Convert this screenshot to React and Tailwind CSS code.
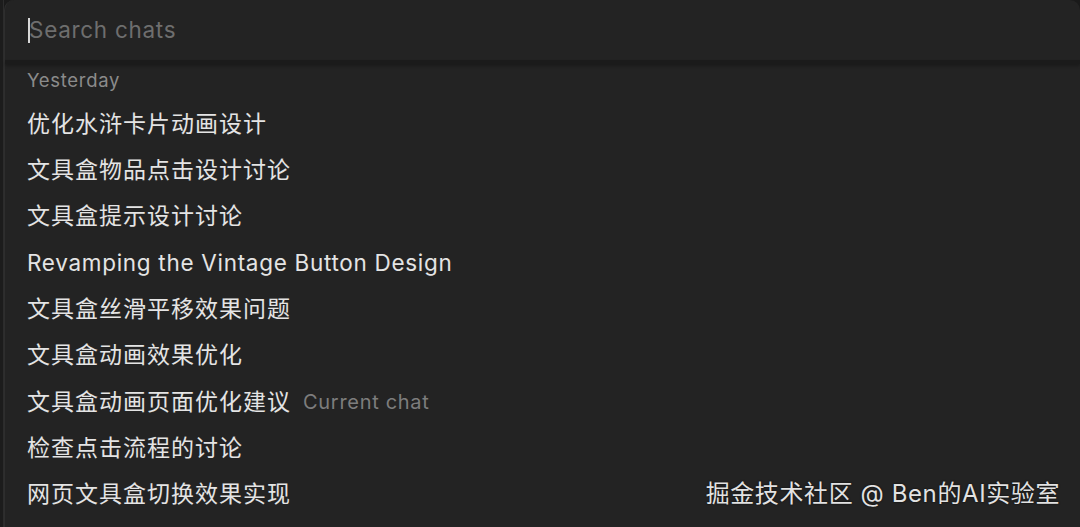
import React from 'react';

const chats = [
  { title: '优化水浒卡片动画设计' },
  { title: '文具盒物品点击设计讨论' },
  { title: '文具盒提示设计讨论' },
  { title: 'Revamping the Vintage Button Design', latin: true },
  { title: '文具盒丝滑平移效果问题' },
  { title: '文具盒动画效果优化' },
  { title: '文具盒动画页面优化建议', current: true },
  { title: '检查点击流程的讨论' },
  { title: '网页文具盒切换效果实现' },
];

const font = { fontFamily: 'Inter, "Noto Sans CJK SC", sans-serif' };

export default function App() {
  return (
    <div className="relative flex w-[1080px] h-[527px] overflow-hidden bg-[#1a1a1a]" style={font}>
      {/* sliver of the sidebar behind the palette */}
      <div className="w-[4px] shrink-0 bg-[#1c1c1c] border-r border-[#2c2c2c]" />

      {/* command palette */}
      <div className="flex-1 flex flex-col bg-[#232323] rounded-t-[10px] border-l border-[#2e2e2e]">
        <div className="h-[60px] flex items-center px-[23px] shrink-0">
          <span className="w-[2px] h-[25px] bg-[#d8d8d8] -mr-[1px]" />
          <span className="text-[22.5px] text-[#6e6e6e] tracking-[0.7px]">Search chats</span>
        </div>
        <div className="h-[4px] bg-[#1b1b1b] shadow-[0_2px_3px_rgba(0,0,0,0.25)] shrink-0" />

        <div className="flex flex-col px-[22px] pt-[5px]">
          <div className="h-[24px] flex items-center text-[18.5px] text-[#8b8b8b] tracking-[0.7px]">Yesterday</div>
          <div className="flex flex-col mt-[8px]">
            {chats.map((c) => (
              <div key={c.title} className="h-[46.3px] flex items-center gap-[12px]">
                <span
                  className={
                    c.latin
                      ? 'text-[22.5px] text-[#e4e4e4] tracking-[0.7px]'
                      : 'text-[23px] text-[#e4e4e4] tracking-[1px]'
                  }
                >
                  {c.title}
                </span>
                {c.current && (
                  <span className="text-[20px] text-[#7d7d7d] tracking-[0.7px]">Current chat</span>
                )}
              </div>
            ))}
          </div>
        </div>
      </div>

      {/* watermark */}
      <div className="absolute right-[20px] bottom-[15px] text-[24px] text-[#e2e2e2] tracking-[0.6px] [text-shadow:0_0_2px_rgba(0,0,0,0.8)]">
        掘金技术社区 @ Ben的AI实验室
      </div>
    </div>
  );
}
